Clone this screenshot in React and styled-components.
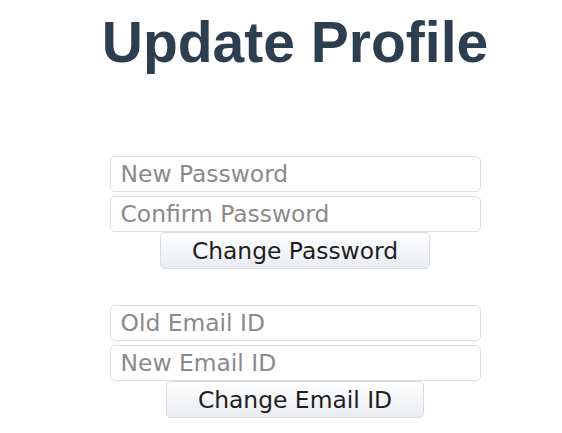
import styled, { createGlobalStyle } from "styled-components";

const GlobalStyle = createGlobalStyle`
body {
  margin: 0;
  background: #fff;
}
`

const App = () => {
    return(
        <Page>
            <GlobalStyle/>
            <Title>Update Profile</Title>

            <Form>
                <Field type="password" placeholder="New Password"/>
                <Field type="password" placeholder="Confirm Password"/>
                <Button>Change Password</Button>
            </Form>

            <Form>
                <Field type="email" placeholder="Old Email ID"/>
                <Field type="email" placeholder="New Email ID"/>
                <Button>Change Email ID</Button>
            </Form>
        </Page>
    )
};

const Page = styled.div`
display: flex;
flex-direction: column;
align-items: center;
padding: 14px 0 0 28px;
`

const Title = styled.h1`
margin: 0 0 85px;
font-family: "Liberation Sans", Arial, sans-serif;
font-size: 57px;
line-height: 57px;
font-weight: 700;
color: #2c3e50;
`

const Form = styled.div`
display: flex;
flex-direction: column;
align-items: center;
margin-bottom: 36px;
`

const Field = styled.input`
box-sizing: border-box;
width: 371px;
height: 36px;
margin-bottom: 4px;
padding: 0 10px;
border: 1px solid #dedede;
border-radius: 5px;
font-family: "DejaVu Sans", sans-serif;
font-size: 23.4px;
color: #222;
outline: none;

& + & {
  margin-bottom: 0;
}

&::placeholder {
  color: #8a8a8a;
}
`

const Button = styled.button`
box-sizing: border-box;
height: 37px;
padding: 0 31px;
border: 1px solid #d8dadd;
border-radius: 5px;
background: linear-gradient(#ffffff, #e9ecf0);
font-family: "DejaVu Sans", sans-serif;
font-size: 23.4px;
color: #1e1e1e;
`

export default App;
